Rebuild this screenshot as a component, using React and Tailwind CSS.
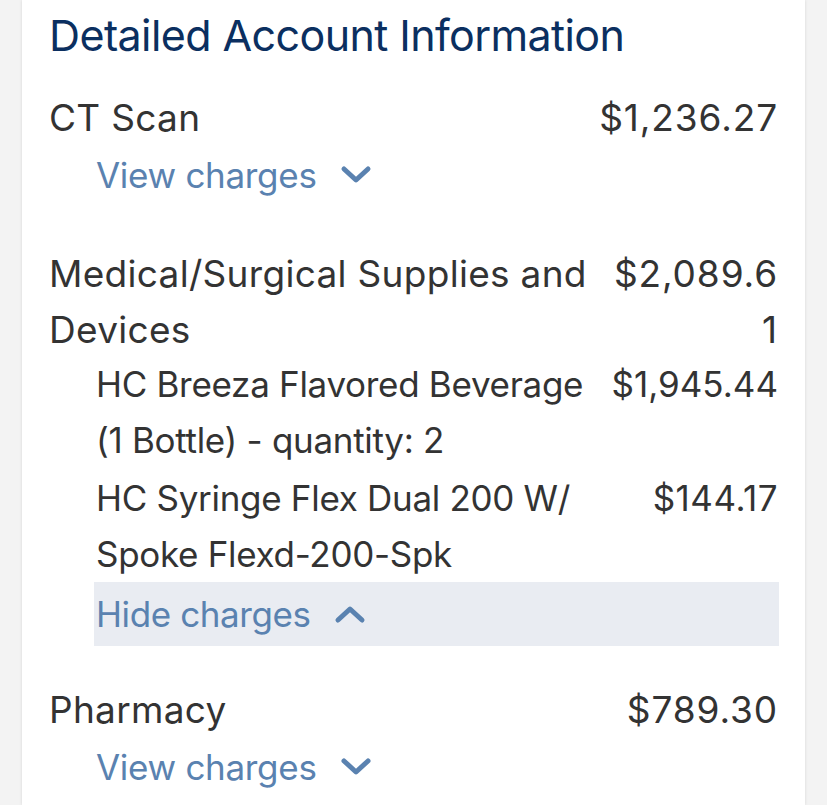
import React from "react";

function ChevronDown() {
  return (
    <svg width="32" height="20" viewBox="0 0 32 20" className="ml-[23px] shrink-0">
      <path d="M4 4 L16 15 L28 4" fill="none" stroke="#5a82b0" strokeWidth="5" strokeLinecap="round" strokeLinejoin="round" />
    </svg>
  );
}

function ChevronUp() {
  return (
    <svg width="32" height="20" viewBox="0 0 32 20" className="ml-[23px] shrink-0">
      <path d="M4 16 L16 5 L28 16" fill="none" stroke="#5a82b0" strokeWidth="5" strokeLinecap="round" strokeLinejoin="round" />
    </svg>
  );
}

function ViewCharges() {
  return (
    <div className="flex items-center pl-[47px] text-[#5a82b0] text-[35px] tracking-[-0.3px] leading-[56px] mt-[1px]">
      <span>View charges</span>
      <ChevronDown />
    </div>
  );
}

export default function App() {
  return (
    <div className="min-h-[805px] bg-[#f3f3f3] flex" style={{ fontFamily: "Inter, 'Noto Sans', sans-serif" }}>
      <div className="ml-[22px] w-[783px] bg-white shadow-[0_0_3px_rgba(0,0,0,0.12)] px-[27px] pt-[9px] text-[37px] text-[#333333] tracking-[0.3px]">
        <h1 className="text-[43px] leading-[53px] text-[#0b2f60] tracking-[-0.6px]">Detailed Account Information</h1>

        <div className="mt-[28px]">
          <div className="flex justify-between leading-[56px]">
            <span>CT Scan</span>
            <span className="tracking-[0.9px]">$1,236.27</span>
          </div>
          <ViewCharges />
        </div>

        <div className="mt-[43px]">
          <div className="flex justify-between leading-[56px]">
            <span>
              <span className="block">Medical/Surgical Supplies and</span>
              <span className="block">Devices</span>
            </span>
            <span className="text-right tracking-[0.9px]">
              <span className="block">$2,089.6</span>
              <span className="block">1</span>
            </span>
          </div>
          <div className="pl-[47px] -mt-[2px] text-[35px] tracking-[-0.3px]">
            <div className="flex justify-between leading-[56px]">
              <span>
                <span className="block">HC Breeza Flavored Beverage</span>
                <span className="block">(1 Bottle) - quantity: 2</span>
              </span>
              <span className="tracking-[0px]">$1,945.44</span>
            </div>
            <div className="flex justify-between leading-[56px] mt-[2px]">
              <span>
                <span className="block">HC Syringe Flex Dual 200 W/</span>
                <span className="block">Spoke Flexd-200-Spk</span>
              </span>
              <span className="tracking-[0.5px]">$144.17</span>
            </div>
          </div>
          <div className="ml-[45px] -mr-[1px] bg-[#e9ecf2] py-[4px] pl-[2px] flex items-center text-[#5a82b0] text-[35px] tracking-[-0.4px] leading-[56px]">
            <span>Hide charges</span>
            <ChevronUp />
          </div>
        </div>

        <div className="mt-[36px]">
          <div className="flex justify-between leading-[56px]">
            <span>Pharmacy</span>
            <span className="tracking-[0.9px]">$789.30</span>
          </div>
          <ViewCharges />
        </div>
      </div>
    </div>
  );
}
